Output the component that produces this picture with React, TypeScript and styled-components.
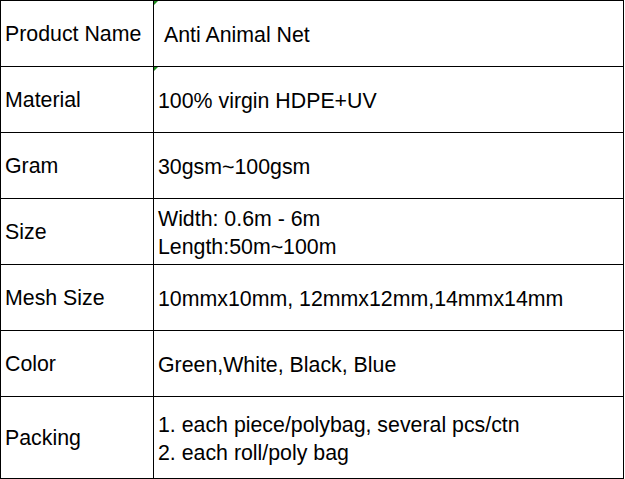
import React from 'react';
import styled, { createGlobalStyle } from 'styled-components';

const GlobalStyle = createGlobalStyle`
  html, body {
    margin: 0;
    padding: 0;
    background: #ffffff;
  }
  body {
    font-family: "Liberation Sans", Arial, sans-serif;
    color: #000000;
  }
`;

type Row = {
  label: string;
  value: string[];
  height: number;
  marker?: boolean;
};

const rows: Row[] = [
  { label: 'Product Name', value: ['\u00a0Anti Animal Net'], height: 66, marker: true },
  { label: 'Material', value: ['100% virgin HDPE+UV'], height: 66, marker: true },
  { label: 'Gram', value: ['30gsm~100gsm'], height: 66 },
  { label: 'Size', value: ['Width: 0.6m - 6m', 'Length:50m~100m'], height: 66 },
  { label: 'Mesh Size', value: ['10mmx10mm, 12mmx12mm,14mmx14mm'], height: 66 },
  { label: 'Color', value: ['Green,White, Black, Blue'], height: 66 },
  {
    label: 'Packing',
    value: ['1. each piece/polybag, several pcs/ctn', '2. each roll/poly bag'],
    height: 82,
  },
];

const App = () => {
  return (
    <>
      <GlobalStyle />
      <SpecTable>
        {rows.map((row) => (
          <React.Fragment key={row.label}>
            <LabelCell $height={row.height}>{row.label}</LabelCell>
            <ValueCell $height={row.height} $marker={row.marker}>
              <Lines>
                {row.value.map((line) => (
                  <Line key={line}>{line}</Line>
                ))}
              </Lines>
            </ValueCell>
          </React.Fragment>
        ))}
      </SpecTable>
    </>
  );
};

export default App;

const SpecTable = styled.div`
  display: grid;
  grid-template-columns: 153px 470px;
  width: 624px;
  box-sizing: border-box;
  border-top: 1px solid #000;
  border-left: 1px solid #000;
  font-size: 21.33px;
`;

const Cell = styled.div<{ $height: number }>`
  position: relative;
  box-sizing: border-box;
  height: ${(p) => p.$height}px;
  border-right: 1px solid #000;
  border-bottom: 1px solid #000;
  display: flex;
  align-items: center;
  white-space: nowrap;
`;

const LabelCell = styled(Cell)`
  padding-left: 4px;
  padding-top: 2px;
`;

const ValueCell = styled(Cell)<{ $marker?: boolean }>`
  padding-left: 4px;
  padding-top: 2px;

  &::before {
    content: '';
    display: ${(p) => (p.$marker ? 'block' : 'none')};
    position: absolute;
    top: 0;
    left: 0;
    width: 0;
    height: 0;
    border-top: 4px solid #1e8c1e;
    border-right: 4px solid transparent;
  }
`;

const Lines = styled.div`
  display: flex;
  flex-direction: column;
`;

const Line = styled.span`
  line-height: 28px;
`;
